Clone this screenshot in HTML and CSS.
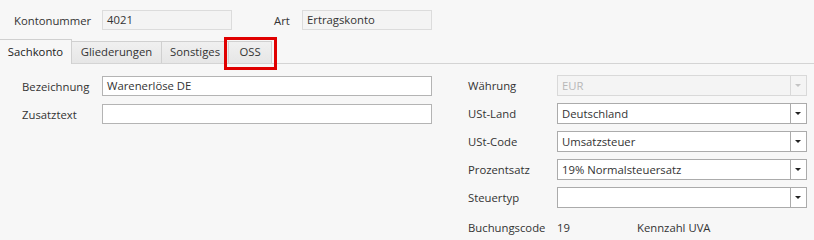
FILE: index.html
```html
<!DOCTYPE html>
<html lang="de">

<head>
    <meta charset="UTF-8">
    <meta name="viewport" content="width=device-width, initial-scale=1.0">
    <title>Sachkonto</title>
    <link rel="stylesheet" href="styles.css">
</head>

<body>
    <div class="head">
        <span class="lbl-konto">Kontonummer</span>
        <div class="field ro w130">4021</div>
        <span class="lbl-art">Art</span>
        <div class="field ro w130">Ertragskonto</div>
    </div>

    <div class="tabs">
        <div class="tab active t1">Sachkonto</div>
        <div class="tab t2">Gliederungen</div>
        <div class="tab t3">Sonstiges</div>
        <div class="tab oss">OSS</div>
    </div>

    <div class="page">
        <div class="col left">
            <span class="lbl">Bezeichnung</span>
            <div class="field">Warenerlöse DE</div>
            <span class="lbl">Zusatztext</span>
            <div class="field"></div>
        </div>

        <div class="col right">
            <span class="lbl">Währung</span>
            <div class="combo disabled"><span class="val">EUR</span><span class="drop"></span></div>
            <span class="lbl">USt-Land</span>
            <div class="combo"><span class="val">Deutschland</span><span class="drop"></span></div>
            <span class="lbl">USt-Code</span>
            <div class="combo"><span class="val">Umsatzsteuer</span><span class="drop"></span></div>
            <span class="lbl">Prozentsatz</span>
            <div class="combo"><span class="val">19% Normalsteuersatz</span><span class="drop"></span></div>
            <span class="lbl">Steuertyp</span>
            <div class="combo"><span class="val"></span><span class="drop"></span></div>
            <span class="lbl">Buchungscode</span>
            <div class="code">
                <span class="num">19</span>
                <span>Kennzahl UVA</span>
            </div>
        </div>
    </div>
</body>

</html>
```

FILE: styles.css
```css
body {
    margin: 0;
    background-color: #f7f7f7;
    font-family: "Open Sans", "Noto Sans", sans-serif;
    font-size: 11.3px;
    color: #333;
}

.head {
    display: flex;
    align-items: center;
    padding: 10px 0 0 14px;
    height: 20px;
}

.lbl-konto {
    width: 88px;
}

.lbl-art {
    margin-left: 42px;
    width: 28px;
}

.field {
    box-sizing: border-box;
    height: 20px;
    line-height: 18px;
    padding: 0 4px;
    border: 1px solid #b4b4b4;
    background-color: #fff;
}

.field.ro {
    border-color: #dcdcdc;
    background-color: #f4f4f4;
}

.w130 {
    width: 130px;
}

.tabs {
    display: flex;
    align-items: flex-end;
    margin-top: 9px;
    height: 24px;
    border-bottom: 1px solid #d4d4d4;
}

.tab {
    box-sizing: border-box;
    height: 22px;
    line-height: 20px;
    text-align: center;
    border: 1px solid #d0d0d0;
    border-left: none;
    border-bottom: none;
    background: linear-gradient(#f0f0f0, #e6e6e6);
}

.t1 {
    width: 72px;
}

.t2 {
    width: 90px;
}

.t3 {
    width: 67px;
}

.tab.active {
    height: 25px;
    margin-bottom: -1px;
    line-height: 24px;
    background: #f7f7f7;
    color: #222;
}

.tab.oss {
    position: relative;
    width: 43px;
}

.tab.oss::after {
    content: "";
    position: absolute;
    left: -5px;
    top: -5px;
    right: -6px;
    bottom: -7px;
    border: 3px solid #e00000;
}

.page {
    display: flex;
    padding-top: 11px;
}

.col {
    display: grid;
    align-items: center;
}

.left {
    margin-left: 22px;
    margin-top: 1px;
    grid-template-columns: 80px 330px;
    grid-auto-rows: 20px;
    row-gap: 8px;
}

.right {
    margin-left: 36px;
    grid-template-columns: 89px 250px;
    grid-template-rows: 21px 21px 21px 21px 21px 24px;
    row-gap: 7px;
}

.combo {
    box-sizing: border-box;
    display: flex;
    height: 21px;
    border: 1px solid #ababab;
    background-color: #fff;
}

.combo .val {
    flex: 1;
    padding: 0 4px;
    line-height: 19px;
}

.combo .drop {
    width: 15px;
    border-left: 1px solid #ababab;
    position: relative;
}

.combo .drop::after {
    content: "";
    position: absolute;
    left: 4px;
    top: 8px;
    border-left: 3px solid transparent;
    border-right: 3px solid transparent;
    border-top: 3px solid #222;
}

.combo.disabled {
    border-color: #d9d9d9;
    background-color: #f4f4f4;
    color: #b8b8b8;
}

.combo.disabled .drop {
    border-left-color: #d9d9d9;
}

.combo.disabled .drop::after {
    border-top-color: #c4c4c4;
}

.code {
    display: flex;
}

.code .num {
    width: 80px;
}
```
